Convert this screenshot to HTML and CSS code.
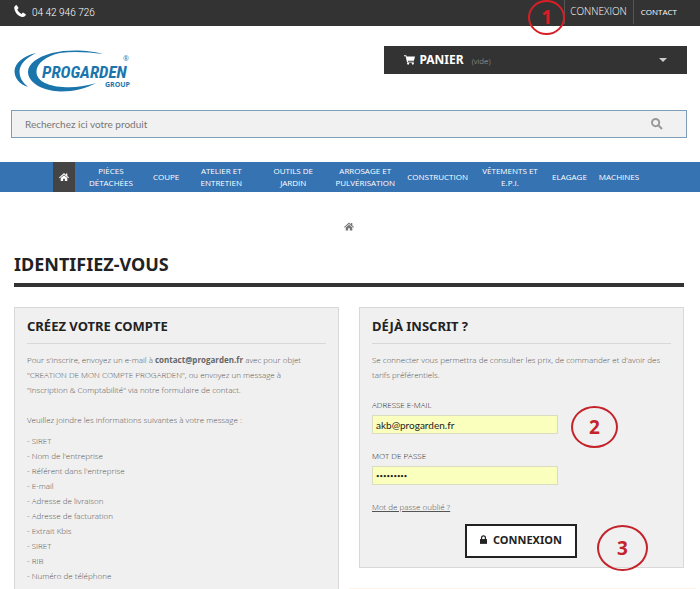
FILE: index.html
```html
<!doctype html>
<html lang="fr">
<head>
    <meta charset="UTF-8">
    <meta name="viewport" content="width=device-width, initial-scale=1">
    <title>Identifiez-vous - Progarden</title>
    <link rel="stylesheet" href="styles.css">
</head>
<body>
    <svg class="sprite" aria-hidden="true">
        <symbol id="home" viewBox="0 0 20 16">
            <path d="M10 0L0 9l1.3 1.4L10 2.8l8.7 7.6L20 9l-3.4-3.1V1h-2.8v2.4z"/>
            <path d="M10 4.4L3.4 10v6h4.9v-4.6h3.4V16h4.9v-6z"/>
        </symbol>
    </svg>

    <div class="topbar">
        <a class="phone" href="tel:0442946726">
            <svg viewBox="0 0 12 12" width="12" height="12"><path d="M2.6 0C1 .6 0 1.900 .3 3.400 1 7.800 4.400 11.300 8.600 11.900c1.500.1 2.900-.9 3.400-2.300L9 7.500 7.400 8.900C5.600 8 4 6.300 3.300 4.600l1.300-1.500z"/></svg>
            <span>04 42 946 726</span>
        </a>
        <a class="login" href="#login">CONNEXION<span class="mark mark1">1</span></a>
        <a class="contact" href="#contact">CONTACT</a>
    </div>

    <header class="header">
        <a class="logo" href="#" aria-label="Progarden Group">
            <svg viewBox="0 0 130 50" width="130" height="50">
                <path d="M28 7C15 10 7 17 6.500 25C6.500 32 11 38 20 41C14 36 11.500 31 11.500 25C12 18 18 12 28 7z"/>
                <path d="M95 8C82 4 60 3 44 7C29 11 20 18 20 26C20 37 35 45 53 45.500C66 45.500 79 42 88 37C78 40 66 42 55 41C38 40 28 34 28.500 25C29 17 38 10 52 7C65 5 80 6 95 8z"/>
                <text class="brand" x="34" y="32">PROGARDEN</text>
                <text class="group" x="97" y="41">GROUP</text>
                <text class="reg" x="115" y="15">®</text>
            </svg>
        </a>
        <button class="cart" type="button">
            <svg viewBox="0 0 20 17" width="11" height="10"><path d="M0 0h4l.8 2H20l-2 8H7l.3 1.700H18V13H5.500L3 1.800H0z"/><circle cx="7.500" cy="15" r="2"/><circle cx="16" cy="15" r="2"/></svg>
            <b>PANIER</b>
            <span>(vide)</span>
            <i class="arrow"></i>
        </button>
    </header>

    <form class="search">
        <input type="text" placeholder="Recherchez ici votre produit" aria-label="Recherche">
        <button type="button" aria-label="Rechercher">
            <svg viewBox="0 0 12 12" width="12" height="12"><circle cx="4.600" cy="4.600" r="3.600"/><path d="M7.300 7.300L11 11"/></svg>
        </button>
    </form>

    <nav class="menu">
        <a class="home" href="#" aria-label="Accueil"><svg width="10" height="8"><use href="#home"/></svg></a>
        <a class="wrap" href="#">PIÈCES DÉTACHÉES</a>
        <a href="#">COUPE</a>
        <a class="wrap" href="#">ATELIER ET ENTRETIEN</a>
        <a class="wrap" href="#">OUTILS DE JARDIN</a>
        <a class="wrap" href="#">ARROSAGE ET PULVÉRISATION</a>
        <a href="#">CONSTRUCTION</a>
        <a class="wrap" href="#">VÊTEMENTS ET E.P.I.</a>
        <a href="#">ELAGAGE</a>
        <a href="#">MACHINES</a>
    </nav>

    <div class="breadcrumb">
        <a href="#" aria-label="Accueil"><svg width="10" height="9"><use href="#home"/></svg></a>
    </div>

    <main>
        <h1>IDENTIFIEZ-VOUS</h1>
        <div class="columns">
            <section class="box create">
                <h2>CRÉEZ VOTRE COMPTE</h2>
                <p>Pour s'inscrire, envoyez un e-mail à <b>contact@progarden.fr</b> avec pour objet "CREATION DE MON COMPTE PROGARDEN", ou envoyez un message à "Inscription &amp; Comptabilité" via notre formulaire de contact.</p>
                <p>Veuillez joindre les informations suivantes à votre message :</p>
                <ul>
                    <li>- SIRET</li>
                    <li>- Nom de l'entreprise</li>
                    <li>- Référent dans l'entreprise</li>
                    <li>- E-mail</li>
                    <li>- Adresse de livraison</li>
                    <li>- Adresse de facturation</li>
                    <li>- Extrait Kbis</li>
                    <li>- SIRET</li>
                    <li>- RIB</li>
                    <li>- Numéro de téléphone</li>
                </ul>
            </section>

            <div class="side">
                <form class="box" id="login">
                    <h2>DÉJÀ INSCRIT ?</h2>
                    <p>Se connecter vous permettra de consulter les prix, de commander et d'avoir des tarifs préférentiels.</p>
                    <div class="field">
                        <label for="email">ADRESSE E-MAIL</label>
                        <input id="email" type="email" value="akb@progarden.fr">
                        <span class="mark mark2">2</span>
                    </div>
                    <div class="field">
                        <label for="passwd">MOT DE PASSE</label>
                        <input id="passwd" type="password" value="progarden">
                    </div>
                    <a class="lost" href="#">Mot de passe oublié ?</a>
                    <div class="submit">
                        <button type="button">
                            <svg viewBox="0 0 8 10" width="7" height="9"><path d="M0 4.500h8V10H0z"/><path class="ring" d="M1.800 5V3a2.200 2.200 0 0 1 4.400 0v2"/></svg>
                            CONNEXION
                        </button>
                        <span class="mark mark3">3</span>
                    </div>
                </form>
                <div class="notice"></div>
            </div>
        </div>
    </main>
</body>
</html>
```

FILE: styles.css
```css
*{padding: 0; margin: 0; box-sizing: border-box;}
body{background: #fff; color: #555; font: 300 8px/15px 'Open Sans', 'Noto Sans', sans-serif;}
a{color: inherit; text-decoration: none;}
button, input{font: inherit; color: inherit; border: 0; background: none;}
svg{display: block; fill: currentColor;}
.sprite{width: 0; height: 0; position: absolute;}

.topbar{display: flex; height: 26px; padding: 0 14px; background: #333; color: #fff; line-height: 23px;}
.phone{display: flex; gap: 6px; margin-right: auto; font: 300 10px Roboto, sans-serif;}
.phone svg{margin-top: 5px;}
.phone span{line-height: 26px;}
.login, .contact{height: 24px; border-left: 1px solid #555; padding: 0 7px;}
.login{position: relative; padding: 0 6px 0 5px; font-size: 10px;}
.contact{padding-right: 9px; font-weight: 400;}

/* numbered steps */
.mark{position: absolute; display: flex; align-items: center; justify-content: center; border: 2px solid #c4232a; border-radius: 50%; color: #c4232a; font: bold 19px/19px 'Noto Sans', sans-serif;}
.mark1{right: 100%; top: 0; width: 37px; height: 35px; border-color: #d81f26; color: #d81f26;}
.mark2{left: 199px; bottom: -14px; width: 47px; height: 42px;}
.mark3{right: 23px; top: 11px; width: 51px; height: 46px;}

.header{display: flex; justify-content: space-between; align-items: flex-start; padding: 20px 13px 0 8px;}
.logo{color: #1b75ad;}
.brand{font: italic bold 17px 'Liberation Sans Narrow', 'Roboto Condensed', sans-serif;}
.group{font: bold 7px 'Open Sans', sans-serif;}
.reg{font: 7px 'Open Sans', sans-serif;}
.cart{display: flex; align-items: center; width: calc(45% - 3px); height: 28px; padding: 0 20px; background: #333; color: #fff;}
.cart b{margin: 0 8px 0 4px; font: bold 12px/26px 'Noto Sans', sans-serif;}
.cart span{color: #aaa;}
.arrow{margin-left: auto; border: 4px solid transparent; border-top-color: #ccc; border-bottom: 0;}

.search{display: flex; align-items: center; height: 28px; margin: 14px 13px 0 11px; border: 1px solid #7d9db8; background: #f1f1f1;}
.search input{flex: 1; height: 26px; padding: 0 13px; color: #777; font: 10px Lato, sans-serif; outline: 0;}
.search input::placeholder{color: #777;}
.search button{padding: 0 23px;}
.search svg{fill: none; stroke: #999; stroke-width: 2;}

.menu{display: flex; justify-content: center; align-items: center; height: 30px; margin-top: 24px; padding-right: 2px; background: #3673b3; color: #fff; font-weight: 400; line-height: 12px; text-align: center;}
.menu a{padding: 0 6px;}
.menu .wrap{width: 72px;}
.menu .home{display: flex; align-items: center; height: 30px; background: #444;}

.breadcrumb{display: flex; justify-content: center; padding: 30px 2px 0 0; color: #777;}

main{padding: 0 16px 20px 14px;}
h1{margin-top: 22px; padding-bottom: 8px; border-bottom: 4px solid #333; color: #222; font: bold 18px/22px 'Noto Sans', sans-serif;}
.columns{display: grid; grid-template-columns: 1fr 1fr; align-items: start; gap: 20px; margin-top: 20px;}
.box{padding: 10px 12px 9px; border: 1px solid #d8d8d8; background: #f0f0f0;}
.box h2{margin-bottom: 8px; padding-bottom: 9px; border-bottom: 1px solid #d8d8d8; color: #222; font: bold 13px/16px 'Noto Sans', sans-serif;}
.box p{margin-bottom: 15px;}
.create p{padding-right: 16px;}
.create b{font-weight: bold; color: #666;}
.box ul{margin-top: -9px; list-style: none;}

.field{position: relative; margin-bottom: 14px;}
.field label{display: block; margin-bottom: 3px; color: #222;}
.field input{display: block; width: 186px; height: 19px; padding: 0 3px; border: 1px solid #dcdcc0; background: #faffbd; color: #222; font: 10px Lato, sans-serif;}
.field input[type=password]{font-size: 6px;}
.lost{text-decoration: underline;}
.submit{position: relative; padding: 10px 0 0 93px;}
.submit button{display: flex; align-items: center; gap: 6px; height: 34px; padding: 0 13px 3px; border: 2px solid #222; background: #fff; color: #222; font: bold 11px/15px 'Noto Sans', sans-serif;}
.ring{fill: none; stroke: #222; stroke-width: 1.400;}
.notice{height: 20px; margin: 20px -12px 0 -10px; background: #fdf3e6;}
```
